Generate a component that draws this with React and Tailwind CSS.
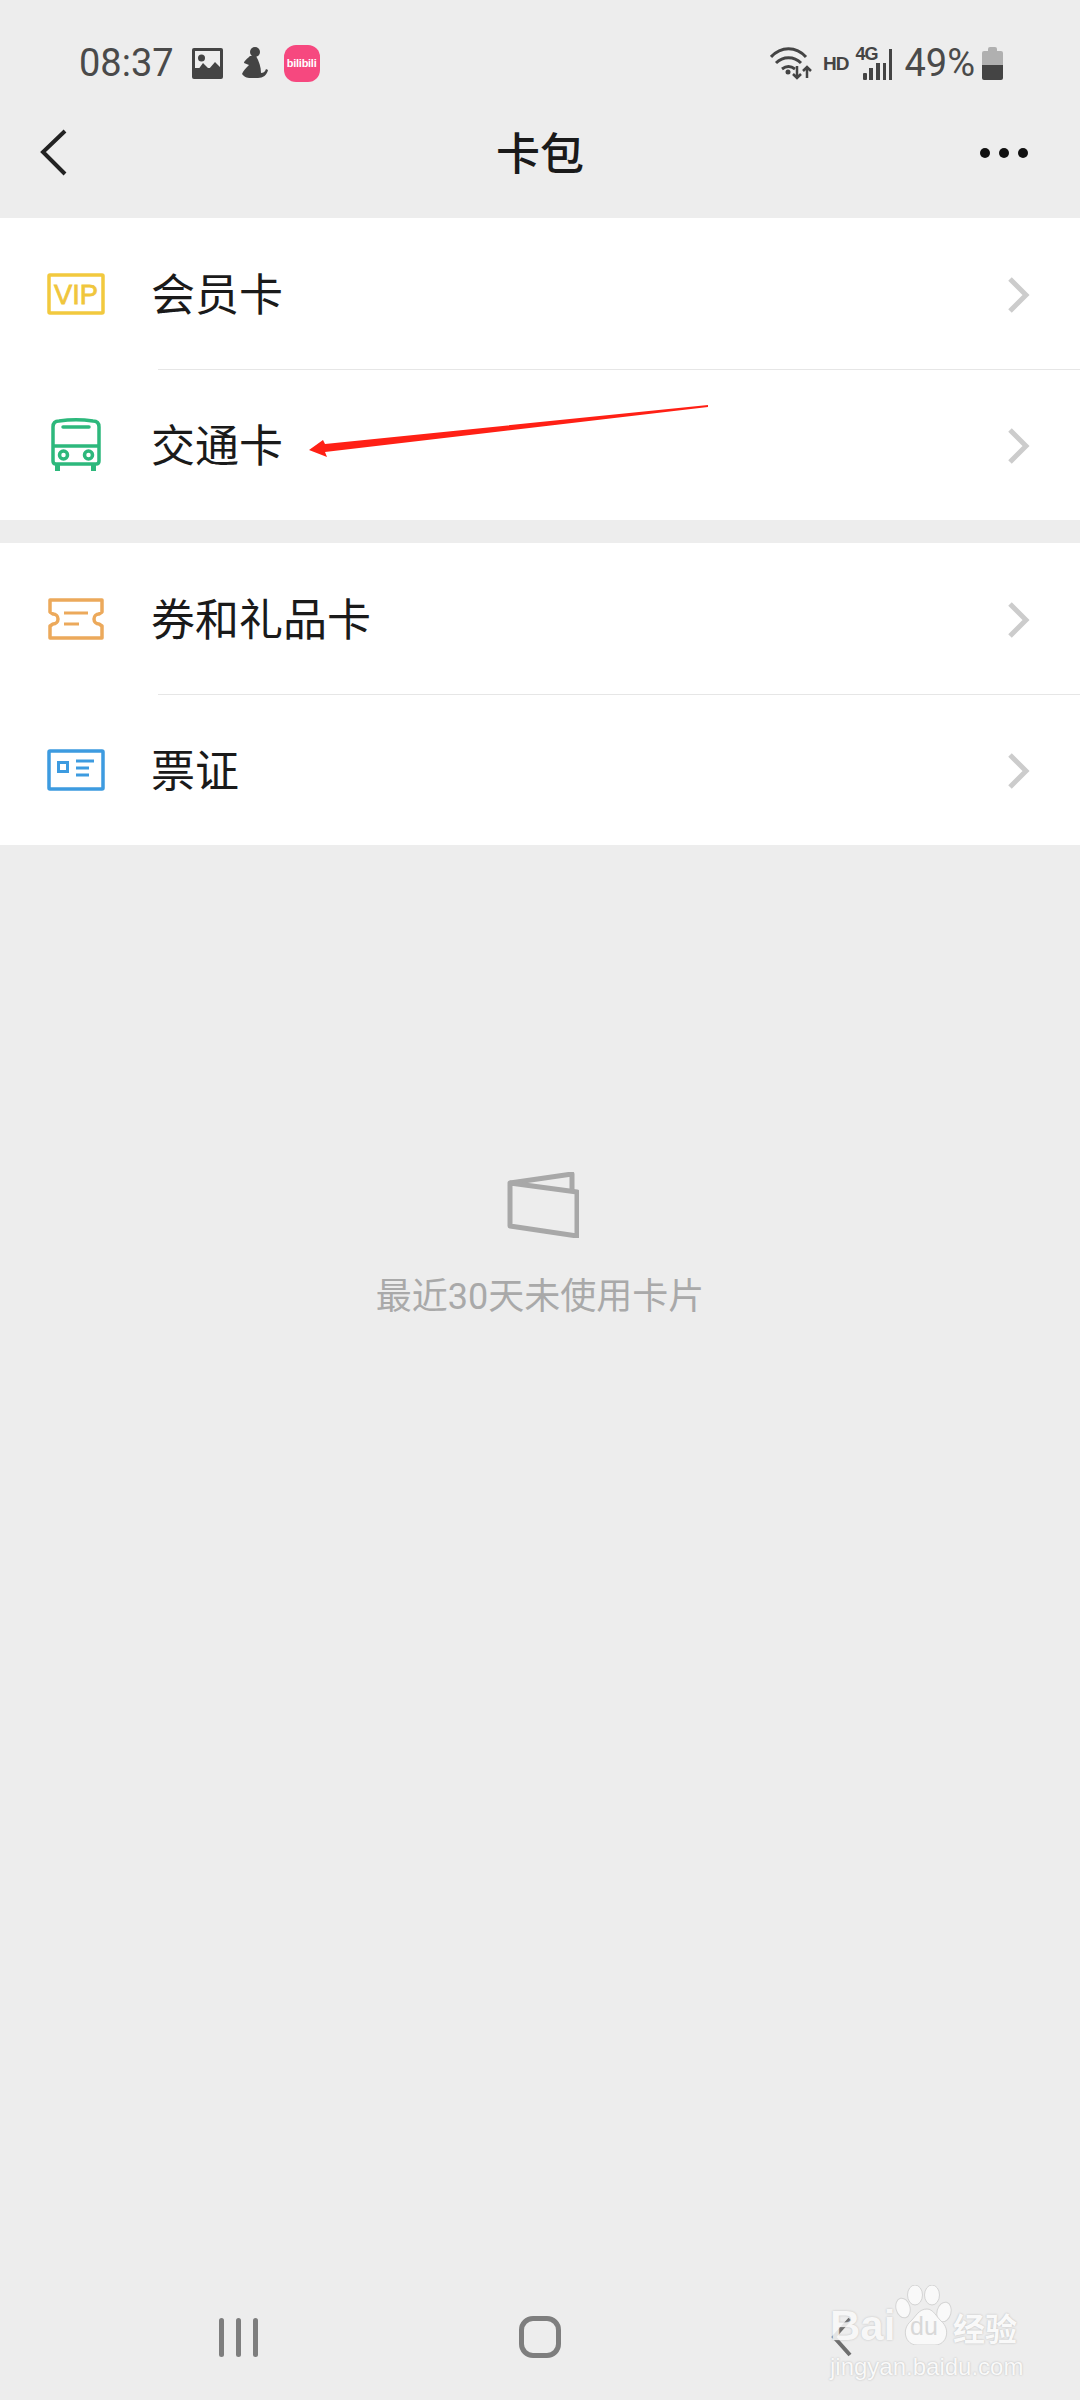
const sans = "font-['Roboto','Noto_Sans_CJK_SC',sans-serif]";

const rows1 = [
  { label: "会员卡", icon: <VipIcon /> },
  { label: "交通卡", icon: <BusIcon /> },
];
const rows2 = [
  { label: "券和礼品卡", icon: <TicketIcon /> },
  { label: "票证", icon: <IdIcon /> },
];

function VipIcon() {
  return (
    <svg width="58" height="42" viewBox="0 0 58 42" fill="none">
      <rect x="2" y="2" width="54" height="38" stroke="#f2c93e" strokeWidth="3.500" rx="1" />
      <text x="29" y="31" textAnchor="middle" fill="#f0c63c" stroke="#f0c63c" strokeWidth="0.800" fontSize="28" textLength="44" lengthAdjust="spacingAndGlyphs" fontFamily="'Liberation Sans', sans-serif">VIP</text>
    </svg>
  );
}
function BusIcon() {
  return (
    <svg width="50" height="54" viewBox="0 0 50 54" fill="none" stroke="#2db87c" strokeWidth="3.500">
      <path d="M2 9c0-4 2-6 6-6 11-1.500 23-1.500 34 0 4 0 6 2 6 6v34c0 2-1 3-3 3H5c-2 0-3-1-3-3z" />
      <path d="M2 28h46" />
      <path d="M12 9h26" strokeLinecap="round" />
      <circle cx="12.500" cy="37" r="4" />
      <circle cx="37.500" cy="37" r="4" />
      <path d="M6.500 46v7M42.500 46v7" strokeWidth="5" />
    </svg>
  );
}
function TicketIcon() {
  return (
    <svg width="58" height="42" viewBox="0 0 58 42" fill="none" stroke="#eca95b" strokeWidth="3.500">
      <path d="M3 2h52v12l-3 2a5 5 0 0 0 0 10l3 2v12H3V28l3-2a5 5 0 0 0 0-10l-3-2z" strokeLinejoin="round" />
      <path d="M17 15h24M17 26h15" strokeWidth="3" />
    </svg>
  );
}
function IdIcon() {
  return (
    <svg width="58" height="42" viewBox="0 0 58 42" fill="none" stroke="#3d9be0" strokeWidth="3.500">
      <rect x="2" y="2" width="54" height="38" rx="1" />
      <rect x="11.500" y="13.500" width="9" height="9" strokeWidth="3" />
      <path d="M29 12h18M29 19h13M29 26h13" strokeWidth="3" />
    </svg>
  );
}
function Chevron() {
  return (
    <svg width="24" height="36" viewBox="0 0 24 36" fill="none" className="ml-auto mr-[49px] mt-[2px]">
      <path d="M3 2l16 16L3 34" stroke="#cccccc" strokeWidth="5" />
    </svg>
  );
}

function Row({ label, icon, divider }) {
  return (
    <div className="relative flex h-[151px] items-center">
      <div className="flex w-[151px] justify-center">{icon}</div>
      <span className="pt-[5px] text-[44px] leading-none text-[#1a1a1a]">{label}</span>
      <Chevron />
      {divider && <div className="absolute left-[158px] right-0 top-[151px] z-10 h-px bg-[#e6e6e6]" />}
    </div>
  );
}

function Watermark() {
  const look = "text-[#f9f9f9] [text-shadow:0_0_2px_#b4b4b4]";
  return (
    <div className="absolute left-[830px] top-[2285px] flex w-[196px] flex-col">
      <div className="flex h-[60px] items-end">
        <span className={`w-[65px] font-['Liberation_Sans',sans-serif] text-[42px] font-bold leading-[38px] opacity-85 ${look}`}>Bai</span>
        <div className="relative h-[60px] w-[58px]">
          <svg width="58" height="60" viewBox="0 0 58 60" fill="#f9f9f9" stroke="#d4d4d4" strokeWidth="1">
            <ellipse cx="20" cy="10" rx="7.500" ry="10" />
            <ellipse cx="37" cy="10" rx="7.500" ry="10" />
            <ellipse cx="8" cy="23" rx="7" ry="10" transform="rotate(-15 8 23)" />
            <ellipse cx="49" cy="27" rx="7" ry="10" transform="rotate(15 49 27)" />
            <path d="M32 24c6 0 9 7 14 12 10 8 6 24-6 24H22c-12 0-16-16-6-24 5-5 8-12 16-12z" />
          </svg>
          <span className="absolute bottom-[6px] left-[15px] font-['Liberation_Sans',sans-serif] text-[25px] leading-none text-[#d8d8d8]">du</span>
        </div>
        <span className={`font-['Noto_Sans_CJK_SC',sans-serif] text-[32px] font-bold leading-[36px] ${look}`}>经验</span>
      </div>
      <span className={`mt-[8px] whitespace-nowrap font-['Liberation_Sans',sans-serif] text-[24px] leading-[28px] ${look}`}>jingyan.baidu.com</span>
    </div>
  );
}

export default function App() {
  return (
    <div className={`relative flex h-[2400px] w-[1080px] flex-col overflow-hidden bg-[#ededed] ${sans}`}>
      {/* status bar */}
      <div className="flex h-[88px] items-center pt-[38px] pl-[79px] pr-[77px] text-[38px] leading-none text-[#4a4a4a]">
        <span>08:37</span>
        <svg width="31" height="31" viewBox="0 0 31 31" className="ml-[18px]">
          <rect width="31" height="31" rx="2" fill="#444" />
          <rect x="3" y="3" width="25" height="17" fill="#eee" />
          <path d="M3 26l8-11 6 6 6-7 5 5v7z" fill="#444" />
          <circle cx="9.500" cy="10" r="3.500" fill="#444" />
        </svg>
        <svg width="28" height="32" viewBox="0 0 28 32" className="ml-[18px]" fill="#444">
          <circle cx="14" cy="5" r="5" />
          <path d="M9 9c-2 2-6 5-6 7l5 2c-3 3-6 6-7 9 3 4 6 4 10 4h6c5 0 9-3 10-8l-2-1c-1 3-3 4-5 4 0-6-2-12-5-17z" />
        </svg>
        <div className="ml-[15px] flex h-[37px] w-[36px] items-center justify-center rounded-[12px] bg-[#f6487f] font-['Liberation_Sans',sans-serif] text-[11px] font-bold tracking-tight text-white">
          bilibili
        </div>
        <svg width="43" height="33" viewBox="0 0 43 33" className="ml-auto" fill="none" stroke="#444" strokeWidth="3">
          <path d="M1 10c10-11 25-11 35 0M6 16c7-7 18-7 25 0M12 22c4-3 9-3 13 0" />
          <circle cx="18" cy="25" r="2.500" fill="#444" stroke="none" />
          <path d="M27 19v12M23 27l4 4 4-4M37 31V20M33 24l4-4 4 4" strokeWidth="2.500" />
        </svg>
        <span className="ml-[10px] font-['Liberation_Sans',sans-serif] text-[19px] font-bold tracking-tighter text-[#444]">HD</span>
        <div className="relative ml-[7px] h-[33px] w-[38px]">
          <span className="absolute left-0 top-[-2px] font-['Liberation_Sans',sans-serif] text-[18px] font-bold tracking-tighter text-[#444]">4G</span>
          <svg width="38" height="33" viewBox="0 0 38 33" className="absolute left-0 top-0" fill="#444">
            <rect x="8" y="26" width="4" height="7" rx="1" />
            <rect x="14" y="21" width="4" height="12" />
            <rect x="21" y="16" width="4" height="17" />
            <rect x="28" y="16" width="3" height="17" />
            <rect x="34" y="2" width="3" height="31" />
          </svg>
        </div>
        <span className="ml-[11px]">49%</span>
        <div className="ml-[7px] flex h-[33px] w-[21px] flex-col items-center">
          <div className="h-[4px] w-[9px] rounded-t-[2px] bg-[#b0b0b0]" />
          <div className="h-[14px] w-full rounded-t-[2px] bg-[#b0b0b0]" />
          <div className="h-[15px] w-full rounded-b-[2px] bg-[#444]" />
        </div>
      </div>

      {/* nav bar */}
      <div className="relative flex h-[130px] items-center justify-center">
        <svg width="28" height="48" viewBox="0 0 28 48" fill="none" className="absolute left-[40px] top-[41px]">
          <path d="M25 2L3 23l22 22" stroke="#222" strokeWidth="4" />
        </svg>
        <span className="pt-[4px] text-[44px] font-medium leading-none text-[#1a1a1a]">卡包</span>
        <div className="absolute right-[52px] top-[60px] flex gap-[9px]">
          <div className="h-[10px] w-[10px] rounded-full bg-[#111]" />
          <div className="h-[10px] w-[10px] rounded-full bg-[#111]" />
          <div className="h-[10px] w-[10px] rounded-full bg-[#111]" />
        </div>
      </div>

      {/* groups */}
      <div className="bg-white">
        {rows1.map((r, i) => <Row key={r.label} {...r} divider={i === 0} />)}
      </div>
      <div className="mt-[23px] bg-white">
        {rows2.map((r, i) => <Row key={r.label} {...r} divider={i === 0} />)}
      </div>

      {/* empty state */}
      <div className="flex flex-1 flex-col items-center pt-[327px]">
        <svg width="72" height="66" viewBox="0 0 72 66" fill="none" stroke="#a8a8a8" strokeWidth="5" strokeLinejoin="round" className="ml-[6px]">
          <path d="M3 11l62-9v17" />
          <path d="M3 11l67 9v44L3 54z" />
        </svg>
        <span className="mt-[41px] text-[36px] leading-none text-[#a9a9a9]">最近30天未使用卡片</span>
      </div>

      {/* bottom nav */}
      <div className="grid h-[126px] grid-cols-[302px_302px_302px] items-center justify-center justify-items-center">
        <div className="flex gap-[12px]">
          <div className="h-[39px] w-[5px] rounded-full bg-[#7e7e7e]" />
          <div className="h-[39px] w-[5px] rounded-full bg-[#7e7e7e]" />
          <div className="h-[39px] w-[5px] rounded-full bg-[#7e7e7e]" />
        </div>
        <div className="h-[42px] w-[42px] rounded-[14px] border-[5px] border-[#7e7e7e]" />
        <svg width="22" height="40" viewBox="0 0 22 40" fill="none">
          <path d="M19 2L3 20l16 18" stroke="#6e6e6e" strokeWidth="4" />
        </svg>
      </div>

      <Watermark />

      {/* red annotation arrow */}
      <svg width="420" height="60" viewBox="0 0 420 60" className="absolute left-[300px] top-[400px]">
        <path d="M408 5v2L25 52l2 5-18-7 14-10 2 4z" fill="#ff2015" />
      </svg>
    </div>
  );
}
